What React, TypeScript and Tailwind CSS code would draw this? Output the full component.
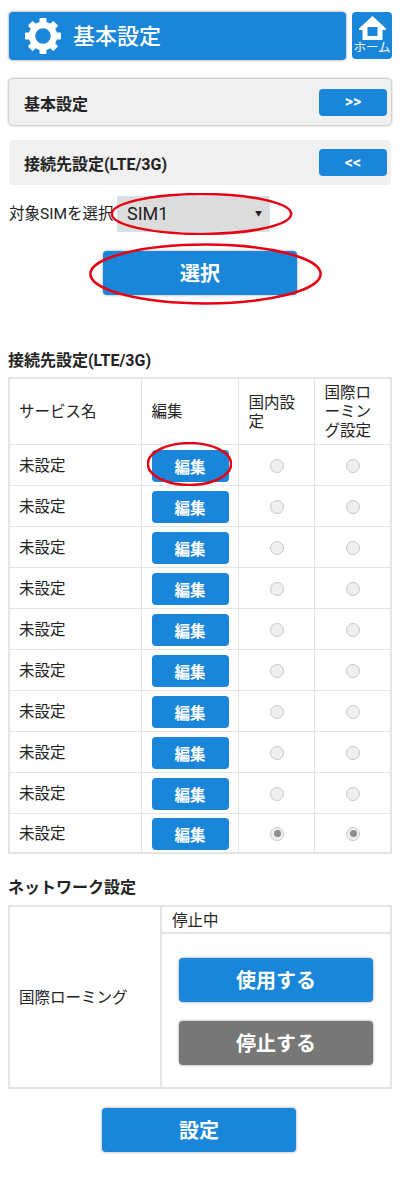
const rows = Array.from({ length: 10 }, (_, i) => i)
const teeth = [0, 45, 90, 135, 180, 225, 270, 315]

function Ellipse({ className }: { className: string }) {
  return (
    <svg className={`absolute pointer-events-none ${className}`} viewBox="0 0 100 100" preserveAspectRatio="none">
      <ellipse cx="50" cy="50" rx="49" ry="47.5" fill="none" stroke="#e60012" strokeWidth="2.5" vectorEffect="non-scaling-stroke" />
    </svg>
  )
}

function Radio({ checked }: { checked?: boolean }) {
  return (
    <span className="mx-auto flex h-[14px] w-[14px] items-center justify-center rounded-full border border-[#c8c8c8] bg-[#efefef]">
      {checked && <span className="h-[7px] w-[7px] rounded-full bg-[#8c8c8c]" />}
    </span>
  )
}

function BigButton({ label, color = 'bg-[#1a86d9]' }: { label: string; color?: string }) {
  return (
    <button className={`h-[44px] w-[194px] rounded-[4px] pt-[2px] text-[20px] font-bold text-white shadow-[0_0_3px_rgba(0,0,0,0.4)] ${color}`}>
      {label}
    </button>
  )
}

export default function App() {
  return (
    <div className="relative h-[1183px] w-[400px] overflow-hidden bg-white text-[15.5px] text-[#222] [font-family:Roboto,'Noto_Sans_CJK_JP',sans-serif]">
      <div className="flex gap-[6px] pl-[9px] pt-[12px]">
        <div className="flex h-[48px] w-[337px] items-center rounded-[4px] bg-[#1a86d9] pl-[16px] shadow-[0_0_3px_rgba(0,0,0,0.45)]">
          <svg width="36" height="36" viewBox="0 0 36 36" fill="#fff">
            <circle cx="18" cy="18" r="11" fill="none" stroke="#fff" strokeWidth="6.5" />
            {teeth.map((a) => (
              <rect key={a} x="14.5" y="0" width="7" height="7" rx="1" transform={`rotate(${a} 18 18)`} />
            ))}
          </svg>
          <span className="ml-[12px] pt-[2px] text-[22px] font-medium leading-none text-white">基本設定</span>
        </div>
        <div className="flex h-[47px] w-[40px] flex-col items-center rounded-[4px] bg-[#1a86d9] pt-[4px]">
          <svg width="27" height="24" viewBox="0 0 27 24" fill="#fff">
            <path fillRule="evenodd" d="M13.5 0 0 12.5V14h3.5v10h20V14H27v-1.5L13.5 0zM8.5 11h10v9h-10v-9z" />
          </svg>
          <span className="mt-[1px] whitespace-nowrap text-[12.5px] leading-[14px] text-white">ホーム</span>
        </div>
      </div>

      <div className="mx-[9px] mt-[19px] flex h-[46px] items-center justify-between rounded-[4px] bg-[#f0f0f0] pl-[15px] pr-[4px] shadow-[0_0_3px_rgba(0,0,0,0.5)]">
        <span className="pt-[5px] text-[16px] font-bold">基本設定</span>
        <span className="flex h-[27px] w-[68px] items-center justify-center rounded-[4px] bg-[#1a86d9] text-[16px] font-bold text-white">&gt;&gt;</span>
      </div>
      <div className="mx-[9px] mt-[15px] flex h-[45px] items-center justify-between rounded-[4px] bg-[#f0f0f0] pl-[15px] pr-[4px]">
        <span className="pt-[5px] text-[16px] font-bold">接続先設定(LTE/3G)</span>
        <span className="flex h-[27px] w-[68px] items-center justify-center rounded-[4px] bg-[#1a86d9] text-[16px] font-bold text-white">&lt;&lt;</span>
      </div>

      <div className="relative">
        <div className="mt-[11px] flex h-[36px] items-center pl-[9px]">
          <span className="w-[108px] whitespace-nowrap pt-[2px]">対象SIMを選択</span>
          <div className="flex h-[36px] w-[153px] items-center justify-between border border-[#cfe3f5] bg-[#dcdcdc] pl-[9px] pr-[7px]">
            <span className="text-[18px] leading-none">SIM1</span>
            <span className="text-[7px] leading-none">▼</span>
          </div>
        </div>
        <Ellipse className="left-[110px] top-[-3px] h-[42px] w-[183px]" />
        <div className="mt-[19px] flex justify-center">
          <BigButton label="選択" />
        </div>
        <Ellipse className="left-[88px] top-[47px] h-[62px] w-[235px]" />
      </div>

      <h2 className="ml-[8px] mt-[57px] h-[18px] text-[16px] font-bold leading-[18px]">接続先設定(LTE/3G)</h2>
      <div className="relative ml-[8px] mt-[7px] w-[382px]">
        <table className="w-[382px] table-fixed border-collapse border-2 border-[#e4e4e4]">
          <colgroup>
            <col className="w-[132px]" />
            <col className="w-[97px]" />
            <col className="w-[76px]" />
            <col className="w-[77px]" />
          </colgroup>
          <thead>
            <tr className="h-[66px] leading-[19px]">
              <th className="border border-[#e4e4e4] pl-[9px] pr-[10px] pt-[3px] text-left font-normal">サービス名</th>
              <th className="border border-[#e4e4e4] pl-[10px] pr-[10px] pt-[3px] text-left font-normal">編集</th>
              <th className="border border-[#e4e4e4] pl-[10px] pr-[10px] pt-[3px] text-left font-normal">国内設定</th>
              <th className="border border-[#e4e4e4] pl-[10px] pr-[10px] pt-[3px] text-left font-normal">国際ローミング設定</th>
            </tr>
          </thead>
          <tbody>
            {rows.map((i) => (
              <tr key={i} className={i === 9 ? 'h-[40px]' : 'h-[41px]'}>
                <td className="border border-[#e4e4e4] pl-[9px] pt-[4px]">未設定</td>
                <td className="border border-[#e4e4e4] pl-[10px]">
                  <button className="mt-[3px] block h-[32px] w-[77px] rounded-[4px] bg-[#1a86d9] pt-[5px] text-[15.5px] font-bold text-white">編集</button>
                </td>
                <td className="border border-[#e4e4e4] pl-[2px] pt-[2px]"><Radio checked={i === 9} /></td>
                <td className="border border-[#e4e4e4] pl-[2px] pt-[2px]"><Radio checked={i === 9} /></td>
              </tr>
            ))}
          </tbody>
        </table>
        <Ellipse className="left-[139px] top-[65px] h-[44px] w-[85px]" />
      </div>

      <h2 className="ml-[8px] mt-[25px] h-[18px] text-[16px] font-bold leading-[18px]">ネットワーク設定</h2>
      <div className="ml-[8px] mt-[8px] flex h-[184px] w-[384px] border-2 border-[#e4e4e4]">
        <div className="flex w-[152px] items-center border-r-2 border-[#e4e4e4] pl-[9px] pt-[4px]">国際ローミング</div>
        <div className="flex flex-1 flex-col">
          <div className="flex h-[27px] items-center border-b-2 border-[#e4e4e4] pl-[10px] pt-[4px]">停止中</div>
          <div className="flex flex-1 flex-col items-center justify-center gap-[19px] pt-[1px]">
            <BigButton label="使用する" />
            <BigButton label="停止する" color="bg-[#777]" />
          </div>
        </div>
      </div>

      <div className="mt-[19px] flex pl-[102px]">
        <BigButton label="設定" />
      </div>
    </div>
  )
}
